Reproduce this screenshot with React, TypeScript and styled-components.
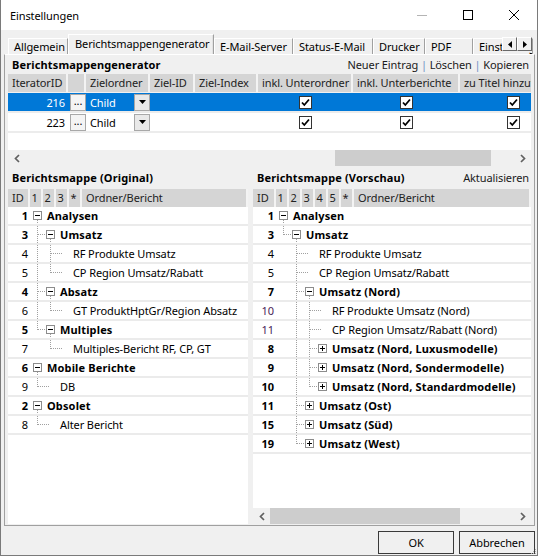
import React from "react";
import styled, { createGlobalStyle } from "styled-components";

const GlobalStyle = createGlobalStyle`
  html, body { margin: 0; padding: 0; background: #ffffff; }
  body {
    font-family: "Noto Sans", "Segoe UI", sans-serif;
    font-size: 11px;
    letter-spacing: -0.1px;
    color: #000;
  }
  * { box-sizing: border-box; }
`;

interface Node {
  id: string;
  label: string;
  level: number;
  folder?: boolean;
  open?: boolean;
  dim?: boolean;
}

const originalTree: Node[] = [
  { id: "1", label: "Analysen", level: 0, folder: true, open: true },
  { id: "3", label: "Umsatz", level: 1, folder: true, open: true },
  { id: "4", label: "RF Produkte Umsatz", level: 2 },
  { id: "5", label: "CP Region Umsatz/Rabatt", level: 2 },
  { id: "4", label: "Absatz", level: 1, folder: true, open: true },
  { id: "6", label: "GT ProduktHptGr/Region Absatz", level: 2 },
  { id: "5", label: "Multiples", level: 1, folder: true, open: true },
  { id: "7", label: "Multiples-Bericht RF, CP, GT", level: 2 },
  { id: "6", label: "Mobile Berichte", level: 0, folder: true, open: true },
  { id: "9", label: "DB", level: 1 },
  { id: "2", label: "Obsolet", level: 0, folder: true, open: true },
  { id: "8", label: "Alter Bericht", level: 1 },
];

const previewTree: Node[] = [
  { id: "1", label: "Analysen", level: 0, folder: true, open: true },
  { id: "3", label: "Umsatz", level: 1, folder: true, open: true },
  { id: "4", label: "RF Produkte Umsatz", level: 2 },
  { id: "5", label: "CP Region Umsatz/Rabatt", level: 2 },
  { id: "7", label: "Umsatz (Nord)", level: 2, folder: true, open: true },
  { id: "10", label: "RF Produkte Umsatz (Nord)", level: 3, dim: true },
  { id: "11", label: "CP Region Umsatz/Rabatt (Nord)", level: 3, dim: true },
  { id: "8", label: "Umsatz (Nord, Luxusmodelle)", level: 3, folder: true },
  { id: "9", label: "Umsatz (Nord, Sondermodelle)", level: 3, folder: true },
  { id: "10", label: "Umsatz (Nord, Standardmodelle)", level: 3, folder: true },
  { id: "11", label: "Umsatz (Ost)", level: 2, folder: true },
  { id: "15", label: "Umsatz (Süd)", level: 2, folder: true },
  { id: "19", label: "Umsatz (West)", level: 2, folder: true },
];

// does the row have a following sibling (same level, same parent)?
function hasLater(list: Node[], i: number) {
  const lvl = list[i].level;
  for (let j = i + 1; j < list.length; j++) {
    if (list[j].level < lvl) return false;
    if (list[j].level === lvl) return true;
  }
  return false;
}

function ancestorIndex(list: Node[], i: number, lvl: number) {
  for (let j = i; j >= 0; j--) if (list[j].level === lvl) return j;
  return -1;
}

const IND = 13;
const ROW_H = 17;

/* ---------- window chrome ---------- */

const Window = styled.div`
  width: 538px;
  height: 556px;
  border: 1px solid #7a7a7a;
  border-top: none;
  background: #f0f0f0;
  display: flex;
  flex-direction: column;
  position: relative;
`;

const TitleBar = styled.div`
  height: 30px;
  background: #ffffff;
  display: flex;
  align-items: center;
  flex: none;
`;

const Title = styled.div`
  flex: 1;
  padding-left: 9px;
  color: #000;
`;

const CaptionBtn = styled.div`
  width: 46px;
  height: 30px;
  display: flex;
  align-items: center;
  justify-content: center;
`;

const TabStrip = styled.div`
  height: 24px;
  flex: none;
  display: flex;
  align-items: flex-end;
  padding-left: 7px;
  position: relative;
  overflow: hidden;
  z-index: 2;
`;

const Tab = styled.div<{ $active?: boolean; $w: number }>`
  width: ${(p) => p.$w}px;
  flex: none;
  height: ${(p) => (p.$active ? 21 : 16)}px;
  margin-bottom: ${(p) => (p.$active ? -1 : 0)}px;
  padding-left: ${(p) => (p.$active ? 6 : 5)}px;
  padding-top: ${(p) => (p.$active ? 1 : 0)}px;
  background: #f0f0f0;
  border-left: 1px solid #ffffff;
  border-top: 1px solid #ffffff;
  border-right: 1px solid #a0a0a0;
  box-shadow: ${(p) => (p.$active ? "inset -1px 0 0 #e3e3e3" : "none")};
  white-space: nowrap;
  overflow: hidden;
  line-height: 15px;
  color: #000;
`;

const TabArrows = styled.div`
  position: absolute;
  left: 501px;
  top: 7px;
  display: flex;
  background: #f0f0f0;
`;

const ArrowBtn = styled.div`
  width: 15px;
  height: 14px;
  border: 1px solid #fff;
  border-right-color: #696969;
  border-bottom-color: #696969;
  background: #f0f0f0;
  display: flex;
  align-items: center;
  justify-content: center;
`;

const Panel = styled.div`
  height: 472px;
  flex: none;
  margin: 0 2px 0 3px;
  border: 1px solid #a0a0a0;
  border-top-color: #ffffff;
  padding: 0 3px 1px 3px;
  display: flex;
  flex-direction: column;
`;

const SectionBar = styled.div`
  height: 19px;
  flex: none;
  display: flex;
  align-items: center;
  justify-content: space-between;
  padding: 0 2px 0 4px;
`;

const SectionTitle = styled.div`
  font-weight: 700;
  letter-spacing: 0.15px;
  color: #000;
`;

const Links = styled.div`
  color: #1a1a1a;
  white-space: pre;
`;

const Sep = styled.span`
  color: #6f8fc4;
`;

/* ---------- top grid ---------- */

const Grid = styled.div`
  height: 92px;
  flex: none;
  background: #ffffff;
  display: flex;
  flex-direction: column;
  overflow: hidden;
`;

const GridHead = styled.div`
  height: 19px;
  flex: none;
  display: flex;
  border-bottom: 1px solid #f0f0f0;
`;

const HeadCell = styled.div<{ $w: number }>`
  width: ${(p) => p.$w}px;
  flex: none;
  height: 18px;
  background: #d5d5d5;
  border-right: 2px solid #f3f3f3;
  padding-left: 4px;
  line-height: 18px;
  color: #222;
  white-space: nowrap;
  overflow: hidden;
`;

const GridRow = styled.div<{ $sel?: boolean }>`
  height: 20px;
  flex: none;
  display: flex;
  border-bottom: 2px solid #ececec;
  background: ${(p) => (p.$sel ? "#0078d7" : "#ffffff")};
  color: ${(p) => (p.$sel ? "#ffffff" : "#000")};
`;

const Cell = styled.div<{ $w: number; $align?: string }>`
  width: ${(p) => p.$w}px;
  flex: none;
  height: 18px;
  display: flex;
  align-items: center;
  justify-content: ${(p) => p.$align || "flex-start"};
`;

const NumCell = styled(Cell)`
  padding-right: 3px;
`;

const EllipsisBtn = styled.div`
  width: 16px;
  height: 17px;
  margin-left: 2px;
  border: 1px solid #a8a8a8;
  background: #f4f4f4;
  color: #000;
  font-size: 11px;
  line-height: 12px;
  text-align: center;
`;

const ComboCell = styled(Cell)`
  justify-content: space-between;
  padding-left: 4px;
`;

const DropBtn = styled.div`
  width: 16px;
  height: 17px;
  border: 1px solid #a8a8a8;
  background: #e9e9e9;
  display: flex;
  align-items: center;
  justify-content: center;
`;

const CheckBox = styled.div`
  width: 13px;
  height: 13px;
  border: 1px solid #333333;
  background: #ffffff;
  display: flex;
  align-items: center;
  justify-content: center;
`;

const Filler = styled.div`
  flex: 1;
  background: #ffffff;
`;

const ScrollBar = styled.div`
  height: 16px;
  flex: none;
  display: flex;
  background: #f0f0f0;
`;

const ScrollArrow = styled.div`
  width: 17px;
  height: 16px;
  flex: none;
  display: flex;
  align-items: center;
  justify-content: center;
`;

const Track = styled.div`
  flex: 1;
  display: flex;
  align-items: stretch;
`;

const Thumb = styled.div<{ $start: number; $size: number }>`
  margin-left: ${(p) => p.$start}px;
  width: ${(p) => p.$size}px;
  background: #cdcdcd;
`;

/* ---------- lower trees ---------- */

const Split = styled.div`
  flex: 1;
  display: flex;
  gap: 5px;
  min-height: 0;
`;

const Pane = styled.div<{ $w: number }>`
  width: ${(p) => p.$w}px;
  flex: none;
  display: flex;
  flex-direction: column;
`;

const PaneBar = styled.div`
  height: 23px;
  flex: none;
  display: flex;
  align-items: center;
  justify-content: space-between;
  padding: 0 2px 0 4px;
`;

const TreeBox = styled.div`
  flex: 1;
  background: #ffffff;
  display: flex;
  flex-direction: column;
  overflow: hidden;
`;

const TreeHead = styled.div`
  height: 18px;
  flex: none;
  display: flex;
`;

const TreeHeadCell = styled.div<{ $w?: number; $center?: boolean }>`
  ${(p) => (p.$w ? `width: ${p.$w}px; flex: none;` : "flex: 1;")}
  height: 18px;
  background: #d5d5d5;
  border-right: 2px solid #f3f3f3;
  line-height: 18px;
  color: #222;
  text-align: ${(p) => (p.$center ? "center" : "left")};
  padding-left: ${(p) => (p.$center ? 0 : 4)}px;
  padding-right: ${(p) => (p.$center ? 2 : 0)}px;
  white-space: nowrap;
`;

const TreeRowBox = styled.div`
  height: 19px;
  flex: none;
  display: flex;
  border-bottom: 2px solid #ebebeb;
`;

const IdCell = styled.div<{ $w: number; $bold?: boolean; $dim?: boolean }>`
  width: ${(p) => p.$w}px;
  flex: none;
  text-align: right;
  padding-right: 2px;
  line-height: 17px;
  font-weight: ${(p) => (p.$bold ? 700 : 400)};
  color: ${(p) => (p.$dim ? "#4a2458" : "#000")};
`;

const TreeCell = styled.div`
  flex: 1;
  display: flex;
  align-items: center;
  height: 17px;
  min-width: 0;
`;

const Label = styled.span<{ $bold?: boolean }>`
  font-weight: ${(p) => (p.$bold ? 700 : 400)};
  letter-spacing: ${(p) => (p.$bold ? "0.15px" : "-0.1px")};
  white-space: nowrap;
  line-height: 17px;
`;

const Footer = styled.div`
  height: 29px;
  flex: none;
  display: flex;
  justify-content: flex-end;
  align-items: flex-start;
  padding: 5px 2px 0 0;
  gap: 5px;
`;

const DlgButton = styled.div`
  width: 76px;
  height: 23px;
  border: 1px solid #3a3a3a;
  background: #f0f0f0;
  display: flex;
  align-items: center;
  justify-content: center;
  color: #000;
`;

const Grip = styled.svg`
  position: absolute;
  right: 0;
  bottom: 0;
`;

/* ---------- small drawings ---------- */

const Check = () => (
  <svg width="11" height="11" viewBox="0 0 11 11">
    <path d="M2 5.5 L4.3 8 L9 2.5" fill="none" stroke="#000" strokeWidth="1.8" />
  </svg>
);

const DownTri = () => (
  <svg width="7" height="4" viewBox="0 0 7 4">
    <path d="M0 0 H7 L3.5 4 Z" fill="#000" />
  </svg>
);

const Chevron = ({ dir }: { dir: "l" | "r" }) => (
  <svg width="6" height="9" viewBox="0 0 6 9">
    <path
      d={dir === "l" ? "M5 1 L1.5 4.5 L5 8" : "M1 1 L4.5 4.5 L1 8"}
      fill="none"
      stroke="#606060"
      strokeWidth="1.7"
    />
  </svg>
);

const TreeLines = ({ list, i }: { list: Node[]; i: number }) => {
  const n = list[i];
  const L = n.level;
  const w = IND * (L + 1) + 4;
  const gx = (k: number) => IND * k + 7.5;
  const mid = 8.5;
  const dots = { stroke: "#a0a0a0", strokeWidth: 1, strokeDasharray: "1 1", shapeRendering: "crispEdges" as const };
  const parts: React.ReactNode[] = [];

  for (let k = 0; k <= L - 2; k++) {
    const a = ancestorIndex(list, i, k + 1);
    if (a >= 0 && hasLater(list, a)) {
      parts.push(<line key={"a" + k} x1={gx(k)} x2={gx(k)} y1={0} y2={ROW_H} {...dots} />);
    }
  }
  if (L >= 1) {
    const x = gx(L - 1);
    parts.push(<line key="v" x1={x} x2={x} y1={0} y2={hasLater(list, i) ? ROW_H : mid} {...dots} />);
    const end = n.folder ? IND * L + 3 : IND * L + 6;
    parts.push(<line key="h" x1={x} x2={end} y1={mid} y2={mid} {...dots} />);
  }
  if (n.folder) {
    const bx = IND * L + 3;
    parts.push(<rect key="b" x={bx + 0.5} y={4.5} width={8} height={8} fill="#fff" stroke="#8c8c8c" shapeRendering="crispEdges" />);
    parts.push(<line key="m" x1={bx + 2} x2={bx + 7} y1={mid} y2={mid} stroke="#000" shapeRendering="crispEdges" />);
    if (!n.open) {
      parts.push(<line key="p" x1={bx + 4.5} x2={bx + 4.5} y1={6} y2={11} stroke="#000" shapeRendering="crispEdges" />);
    } else {
      parts.push(<line key="d" x1={gx(L)} x2={gx(L)} y1={13} y2={ROW_H} {...dots} />);
    }
  }
  return (
    <svg width={w} height={ROW_H} style={{ flex: "none" }}>
      {parts}
    </svg>
  );
};

interface TreeProps {
  list: Node[];
  idW: number;
  levels: number;
}

const Tree = ({ list, idW, levels }: TreeProps) => (
  <>
    <TreeHead>
      <TreeHeadCell $w={idW}>ID</TreeHeadCell>
      {Array.from({ length: levels }, (_, k) => (
        <TreeHeadCell key={k} $w={IND} $center>
          {k + 1}
        </TreeHeadCell>
      ))}
      <TreeHeadCell $w={IND} $center>
        *
      </TreeHeadCell>
      <TreeHeadCell>Ordner/Bericht</TreeHeadCell>
    </TreeHead>
    {list.map((n, i) => (
      <TreeRowBox key={i}>
        <IdCell $w={idW} $bold={n.folder} $dim={n.dim}>
          {n.id}
        </IdCell>
        <TreeCell>
          <TreeLines list={list} i={i} />
          <Label $bold={n.folder}>{n.label}</Label>
        </TreeCell>
      </TreeRowBox>
    ))}
  </>
);

const cols = [
  { t: "IteratorID", w: 60 },
  { t: "", w: 18 },
  { t: "Zielordner", w: 64 },
  { t: "Ziel-ID", w: 45 },
  { t: "Ziel-Index", w: 63 },
  { t: "inkl. Unterordner", w: 95 },
  { t: "inkl. Unterberichte", w: 107 },
  { t: "zu Titel hinzufügen", w: 106 },
];

const rows = [
  { id: "216", sel: true },
  { id: "223", sel: false },
];

const tabs = [
  { t: "Allgemein", w: 60 },
  { t: "Berichtsmappengenerator", w: 146, active: true },
  { t: "E-Mail-Server", w: 79 },
  { t: "Status-E-Mail", w: 80 },
  { t: "Drucker", w: 52 },
  { t: "PDF", w: 48 },
  { t: "Einstellungen", w: 60 },
];

export default function App() {
  return (
    <>
      <GlobalStyle />
      <Window>
        <TitleBar>
          <Title>Einstellungen</Title>
          <CaptionBtn>
            <svg width="10" height="1">
              <rect width="10" height="1" fill="#b4b4b4" />
            </svg>
          </CaptionBtn>
          <CaptionBtn>
            <svg width="10" height="10">
              <rect x="0.5" y="0.5" width="9" height="9" fill="none" stroke="#000" />
            </svg>
          </CaptionBtn>
          <CaptionBtn>
            <svg width="10" height="10">
              <path d="M0 0 L10 10 M10 0 L0 10" stroke="#000" strokeWidth="1" />
            </svg>
          </CaptionBtn>
        </TitleBar>

        <TabStrip>
          {tabs.map((t) => (
            <Tab key={t.t} $w={t.w} $active={t.active}>
              {t.t}
            </Tab>
          ))}
          <TabArrows>
            <ArrowBtn>
              <svg width="4" height="7">
                <path d="M4 0 V7 L0 3.5 Z" fill="#000" />
              </svg>
            </ArrowBtn>
            <ArrowBtn>
              <svg width="4" height="7">
                <path d="M0 0 V7 L4 3.5 Z" fill="#000" />
              </svg>
            </ArrowBtn>
          </TabArrows>
        </TabStrip>

        <Panel>
          <SectionBar>
            <SectionTitle>Berichtsmappengenerator</SectionTitle>
            <Links>
              Neuer Eintrag <Sep>|</Sep> Löschen <Sep>|</Sep> Kopieren
            </Links>
          </SectionBar>

          <Grid>
            <GridHead>
              {cols.map((c, i) => (
                <HeadCell key={i} $w={c.w}>
                  {c.t}
                </HeadCell>
              ))}
            </GridHead>
            {rows.map((r) => (
              <GridRow key={r.id} $sel={r.sel}>
                <NumCell $w={60} $align="flex-end">
                  {r.id}
                </NumCell>
                <Cell $w={18}>
                  <EllipsisBtn>...</EllipsisBtn>
                </Cell>
                <ComboCell $w={64}>
                  Child
                  <DropBtn>
                    <DownTri />
                  </DropBtn>
                </ComboCell>
                <Cell $w={45} />
                <Cell $w={63} />
                <Cell $w={95} $align="center">
                  <CheckBox>
                    <Check />
                  </CheckBox>
                </Cell>
                <Cell $w={107} $align="center">
                  <CheckBox>
                    <Check />
                  </CheckBox>
                </Cell>
                <Cell $w={106} $align="center">
                  <CheckBox>
                    <Check />
                  </CheckBox>
                </Cell>
              </GridRow>
            ))}
            <Filler />
            <ScrollBar>
              <ScrollArrow>
                <Chevron dir="l" />
              </ScrollArrow>
              <Track>
                <Thumb $start={310} $size={156} />
              </Track>
              <ScrollArrow>
                <Chevron dir="r" />
              </ScrollArrow>
            </ScrollBar>
          </Grid>

          <Split>
            <Pane $w={240}>
              <PaneBar>
                <SectionTitle>Berichtsmappe (Original)</SectionTitle>
              </PaneBar>
              <TreeBox>
                <Tree list={originalTree} idW={22} levels={3} />
              </TreeBox>
            </Pane>
            <Pane $w={278}>
              <PaneBar>
                <SectionTitle>Berichtsmappe (Vorschau)</SectionTitle>
                <Links>Aktualisieren</Links>
              </PaneBar>
              <TreeBox>
                <Tree list={previewTree} idW={23} levels={5} />
                <Filler />
                <ScrollBar>
                  <ScrollArrow>
                    <Chevron dir="l" />
                  </ScrollArrow>
                  <Track>
                    <Thumb $start={0} $size={190} />
                  </Track>
                  <ScrollArrow>
                    <Chevron dir="r" />
                  </ScrollArrow>
                </ScrollBar>
              </TreeBox>
            </Pane>
          </Split>
        </Panel>

        <Footer>
          <DlgButton>OK</DlgButton>
          <DlgButton>Abbrechen</DlgButton>
        </Footer>

        <Grip width="8" height="8" viewBox="0 0 8 8">
          <g fill="#b0b0b0">
            <rect x="6" y="2" width="1" height="1" />
            <rect x="4" y="4" width="1" height="1" />
            <rect x="6" y="4" width="1" height="1" />
            <rect x="2" y="6" width="1" height="1" />
            <rect x="4" y="6" width="1" height="1" />
            <rect x="6" y="6" width="1" height="1" />
          </g>
        </Grip>
      </Window>
    </>
  );
}
